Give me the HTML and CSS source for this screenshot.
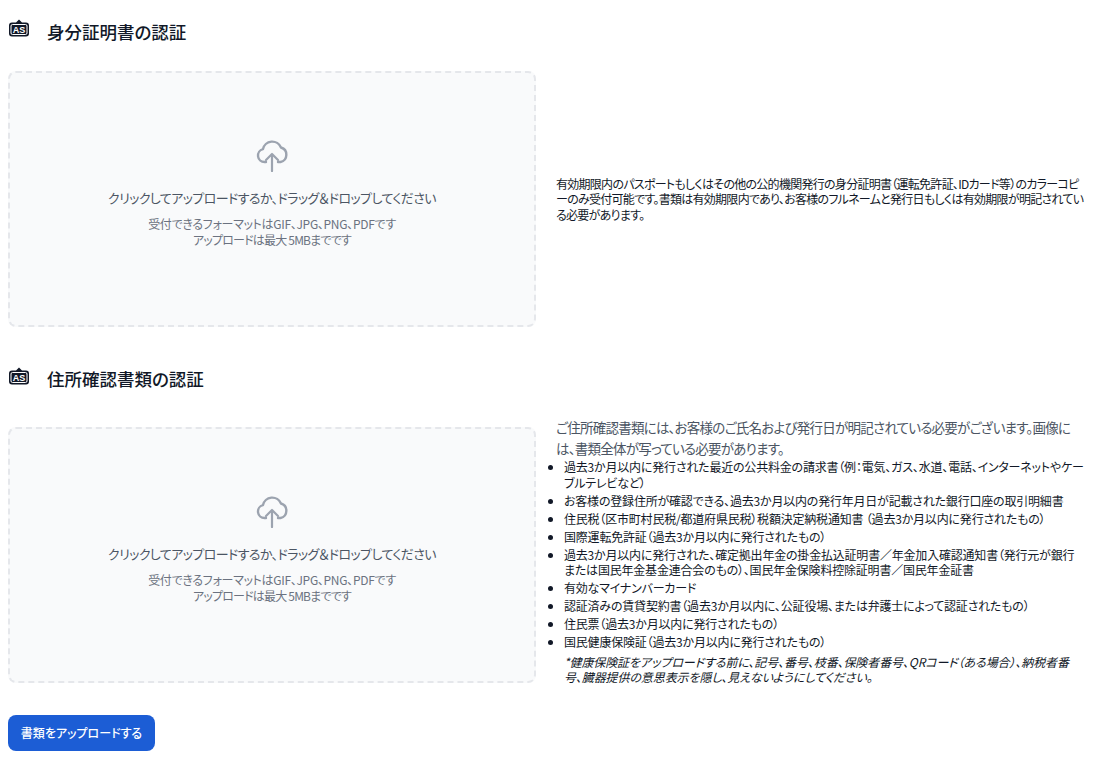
FILE: index.html
```html
<!DOCTYPE html>
<html lang="ja">
<head>
<meta charset="utf-8">
<title>書類の認証</title>
<link rel="stylesheet" href="styles.css">
</head>
<body>
<main class="page">
  <section class="section first">
    <h2 class="heading">
      <svg class="badge" viewBox="0 0 22 20"><path d="M4 3.5h4L11 .5l3 3h4a3 3 0 0 1 3 3v8a3 3 0 0 1-3 3H4a3 3 0 0 1-3-3v-8a3 3 0 0 1 3-3z" fill="#111827"/><rect x="3" y="5.5" width="16" height="10" rx="1.5" fill="none" stroke="#fff" stroke-width="1"/><text x="11" y="14" text-anchor="middle" class="badge-text">AS</text></svg>
      <span>身分証明書の認証</span>
    </h2>
    <div class="row">
      <label class="drop">
        <svg class="cloud" viewBox="0 0 32 34" fill="none"><path d="M10 24H8.5a6.5 6.5 0 0 1-1.6-12.8A9.5 9.5 0 0 1 25 9.5a7.5 7.5 0 0 1-.5 14.5H22" stroke="#9ca3af" stroke-width="2.4" stroke-linecap="round" stroke-linejoin="round"/><path d="M16 33V16m-6 6 6-6 6 6" stroke="#9ca3af" stroke-width="2.2" stroke-linecap="round" stroke-linejoin="round"/></svg>
        <p class="drop-title">クリックしてアップロードするか、ドラッグ＆ドロップしてください</p>
        <p class="drop-note">受付できるフォーマットはGIF、JPG、PNG、PDFです<br><span class="limit">アップロードは最大 5MBまでです</span></p>
      </label>
      <div class="info">
        <p>有効期限内のパスポートもしくはその他の公的機関発行の身分証明書（運転免許証、IDカード等）のカラーコピーのみ受付可能です。書類は有効期限内であり、お客様のフルネームと発行日もしくは有効期限が明記されている必要があります。</p>
      </div>
    </div>
  </section>
  <section class="section second">
    <h2 class="heading">
      <svg class="badge" viewBox="0 0 22 20"><path d="M4 3.5h4L11 .5l3 3h4a3 3 0 0 1 3 3v8a3 3 0 0 1-3 3H4a3 3 0 0 1-3-3v-8a3 3 0 0 1 3-3z" fill="#111827"/><rect x="3" y="5.5" width="16" height="10" rx="1.5" fill="none" stroke="#fff" stroke-width="1"/><text x="11" y="14" text-anchor="middle" class="badge-text">AS</text></svg>
      <span>住所確認書類の認証</span>
    </h2>
    <div class="row">
      <label class="drop">
        <svg class="cloud" viewBox="0 0 32 34" fill="none"><path d="M10 24H8.5a6.5 6.5 0 0 1-1.6-12.8A9.5 9.5 0 0 1 25 9.5a7.5 7.5 0 0 1-.5 14.5H22" stroke="#9ca3af" stroke-width="2.4" stroke-linecap="round" stroke-linejoin="round"/><path d="M16 33V16m-6 6 6-6 6 6" stroke="#9ca3af" stroke-width="2.2" stroke-linecap="round" stroke-linejoin="round"/></svg>
        <p class="drop-title">クリックしてアップロードするか、ドラッグ＆ドロップしてください</p>
        <p class="drop-note">受付できるフォーマットはGIF、JPG、PNG、PDFです<br><span class="limit">アップロードは最大 5MBまでです</span></p>
      </label>
      <div class="info">
        <p class="lead">ご住所確認書類には、お客様のご氏名および発行日が明記されている必要がございます。画像には、書類全体が写っている必要があります。</p>
        <ul class="docs">
          <li>過去3か月以内に発行された最近の公共料金の請求書（例：電気、ガス、水道、電話、インターネットやケーブルテレビなど）</li>
          <li>お客様の登録住所が確認できる、過去3か月以内の発行年月日が記載された銀行口座の取引明細書</li>
          <li>住民税（区市町村民税/都道府県民税）税額決定納税通知書 （過去3か月以内に発行されたもの）</li>
          <li>国際運転免許証（過去3か月以内に発行されたもの）</li>
          <li>過去3か月以内に発行された、確定拠出年金の掛金払込証明書／年金加入確認通知書（発行元が銀行または国民年金基金連合会のもの）、国民年金保険料控除証明書／国民年金証書</li>
          <li>有効なマイナンバーカード</li>
          <li>認証済みの賃貸契約書（過去3か月以内に、公証役場、または弁護士によって認証されたもの）</li>
          <li>住民票（過去3か月以内に発行されたもの）</li>
          <li>国民健康保険証（過去3か月以内に発行されたもの）
            <p class="footnote">*健康保険証をアップロードする前に、記号、番号、枝番、保険者番号、QRコード（ある場合）、納税者番号、臓器提供の意思表示を隠し、見えないようにしてください。</p>
          </li>
        </ul>
      </div>
    </div>
  </section>
  <button class="submit" type="button">書類をアップロードする</button>
</main>
</body>
</html>
```
FILE: styles.css
```css
* { box-sizing: border-box; }
html, body { margin: 0; padding: 0; background: #fff; }
body {
  font-family: "Noto Sans CJK JP", "Noto Sans", sans-serif;
  font-feature-settings: "palt";
  color: #111827;
  height: 761px;
  overflow: hidden;
}
.page { width: 1084px; padding: 19.5px 0 0 8px; }
.heading {
  display: flex;
  align-items: center;
  gap: 17px;
  margin: 0;
  height: 24px;
  font-size: 17.5px;
  font-weight: 500;
  line-height: 24px;
}
.badge { width: 22px; height: 20px; margin-top: -5px; flex: none; }
.badge-text { font: 700 9px "Liberation Sans", sans-serif; fill: #fff; }
.row {
  display: grid;
  grid-template-columns: 528px 1fr;
  column-gap: 20px;
  align-items: center;
}
.first .row { margin-top: 27.5px; }
.second { margin-top: 40px; }
.second .row { margin-top: 26px; }
.second .info { margin-bottom: 6px; }
.drop {
  display: flex;
  flex-direction: column;
  align-items: center;
  justify-content: center;
  height: 256px;
  padding-bottom: 12px;
  background: #f9fafb;
  border: 2px dashed #e5e7eb;
  border-radius: 8px;
}
.cloud { width: 32px; height: 34px; margin-bottom: 16px; }
.drop-title {
  margin: 0 0 8px;
  font-size: 13px;
  line-height: 20px;
  letter-spacing: -0.6px;
  color: #4b5563;
}
.drop-note {
  margin: 0;
  font-size: 12px;
  line-height: 16px;
  letter-spacing: -0.3px;
  text-align: center;
  color: #6b7280;
}
.limit { letter-spacing: -0.8px; }
.info { font-size: 12px; line-height: 15.6px; letter-spacing: -0.2px; }
.first .info { letter-spacing: -0.72px; }
.info p { margin: 0; }
.info .lead { font-size: 13.5px; line-height: 21px; letter-spacing: -0.75px; color: #4b5563; }
.docs { margin: 0; padding: 0 0 0 8px; }
.docs li { margin-bottom: 2.4px; }
.info .footnote { margin-top: 4px; font-style: italic; letter-spacing: -0.1px; }
.submit {
  display: block;
  margin-top: 22px;
  width: 147px;
  height: 36px;
  padding: 0;
  border: 0;
  border-radius: 8px;
  background: #1c5dd5;
  color: #fff;
  font: 500 12px/18px "Noto Sans CJK JP", sans-serif;
  font-feature-settings: "palt";
}
```
